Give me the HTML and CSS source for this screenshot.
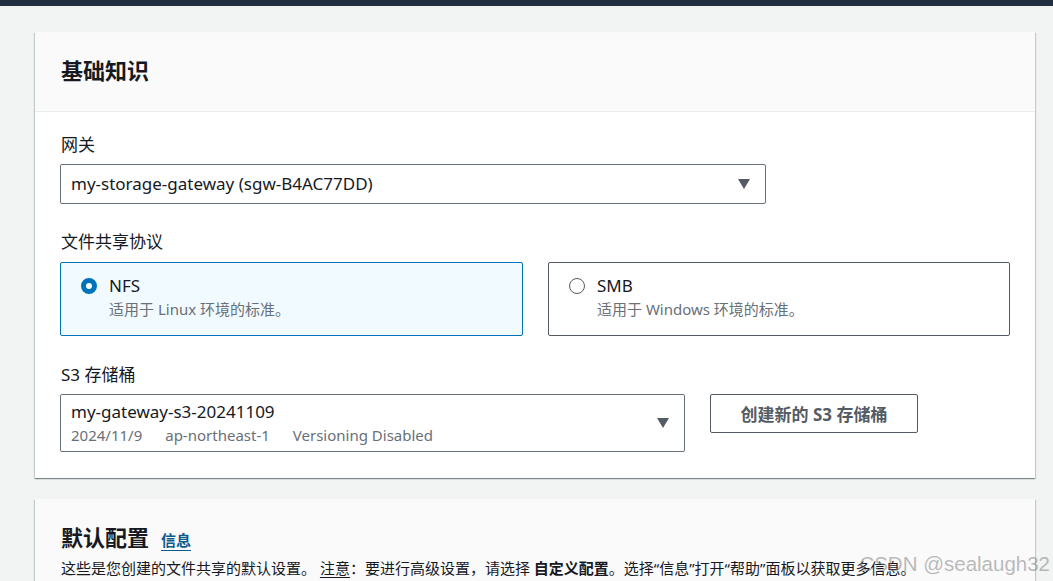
FILE: index.html
```html
<!DOCTYPE html>
<html lang="zh">
<head>
<meta charset="utf-8">
<link rel="stylesheet" href="styles.css">
</head>
<body>
<div class="topbar"></div>
<main class="page">
  <section class="card">
    <header class="card-header">
      <h2 class="card-title">基础知识</h2>
    </header>
    <div class="card-body">
      <div class="field">
        <div class="label">网关</div>
        <div class="select select-gw">
          <span class="select-value">my-storage-gateway (sgw-B4AC77DD)</span>
          <span class="caret"></span>
        </div>
      </div>
      <div class="field field-tiles">
        <div class="label">文件共享协议</div>
        <div class="tiles">
          <div class="tile tile-on">
            <span class="radio radio-on"></span>
            <div class="tile-text">
              <div class="tile-name">NFS</div>
              <div class="tile-desc">适用于 Linux 环境的标准。</div>
            </div>
          </div>
          <div class="tile">
            <span class="radio"></span>
            <div class="tile-text">
              <div class="tile-name">SMB</div>
              <div class="tile-desc">适用于 Windows 环境的标准。</div>
            </div>
          </div>
        </div>
      </div>
      <div class="field field-last">
        <div class="label">S3 存储桶</div>
        <div class="bucket-row">
          <div class="select select-bucket">
            <div class="bucket-text">
              <div class="select-value">my-gateway-s3-20241109</div>
              <div class="bucket-meta"><span>2024/11/9</span><span>ap-northeast-1</span><span>Versioning Disabled</span></div>
            </div>
            <span class="caret"></span>
          </div>
          <button class="btn">创建新的 S3 存储桶</button>
        </div>
      </div>
    </div>
  </section>
  <section class="card card2">
    <header class="card-header2">
      <h2 class="card-title">默认配置 <a class="info">信息</a></h2>
      <p class="desc">这些是您创建的文件共享的默认设置。 <u>注意</u>：要进行高级设置，请选择 <b>自定义配置</b>。选择“信息”打开“帮助”面板以获取更多信息。</p>
    </header>
  </section>
</main>
<div class="watermark">CSDN @sealaugh32</div>
</body>
</html>
```
FILE: styles.css
```css
* { box-sizing: border-box; }
html, body {
  margin: 0;
  height: 100%;
  overflow: hidden;
}
body {
  background: #f2f3f3;
  font-family: "Noto Sans", "Noto Sans CJK SC", sans-serif;
  color: #16191f;
  position: relative;
}
.topbar {
  height: 6px;
  background: #232f3e;
}
.page {
  padding: 26px 18px 0 35px;
  display: flex;
  flex-direction: column;
  gap: 21px;
}
.card {
  background: #fff;
  width: 1000px;
  box-shadow: 0 1px 1px 0 rgba(0,28,36,.3), 1px 1px 1px 0 rgba(0,28,36,.15), -1px 1px 1px 0 rgba(0,28,36,.15);
}
.card-header {
  background: #fafafa;
  border-bottom: 1px solid #eaeded;
  padding: 23px 25px 26px 26px;
}
.card-title {
  margin: 0;
  font-size: 22px;
  line-height: 30px;
  font-weight: 700;
  display: flex;
  align-items: baseline;
  gap: 12px;
}
.card-body {
  padding: 22px 25px 26px 25px;
}
.field { margin-bottom: 27px; }
.field-tiles { margin-bottom: 28px; }
.field-last { margin-bottom: 0; }
.label {
  font-size: 17px;
  line-height: 22px;
  margin-bottom: 8px;
  padding-left: 1px;
}
.select {
  border: 1px solid #687078;
  border-radius: 2px;
  background: #fff;
  display: flex;
  align-items: center;
  justify-content: space-between;
  padding: 0 15px 0 10px;
}
.select-gw {
  width: 706px;
  height: 40px;
}
.select-value {
  font-size: 17px;
  line-height: 22px;
}
.caret {
  width: 0;
  height: 0;
  border-left: 6.5px solid transparent;
  border-right: 6.5px solid transparent;
  border-top: 10px solid #545b64;
}
.tiles {
  display: grid;
  grid-template-columns: 463px 462px;
  gap: 25px;
  margin-top: 9px;
}
.tile {
  height: 74px;
  border: 1px solid #545b64;
  border-radius: 2px;
  display: flex;
  align-items: flex-start;
  gap: 12px;
  padding: 12px 20px;
}
.tile-on {
  border-color: #0073bb;
  background: #f1faff;
}
.radio {
  width: 16px;
  height: 16px;
  border-radius: 50%;
  border: 1px solid #545b64;
  margin-top: 3px;
  flex: none;
  background: #fff;
}
.radio-on {
  border: 5px solid #0073bb;
}
.tile-name {
  font-size: 17px;
  line-height: 22px;
}
.tile-desc {
  font-size: 15px;
  line-height: 24px;
  color: #687078;
}
.bucket-row {
  display: flex;
  gap: 25px;
  align-items: flex-start;
  margin-top: 8px;
}
.select-bucket {
  width: 625px;
  height: 58px;
  padding-right: 15px;
}
.bucket-text { margin-top: 1px; }
.bucket-meta {
  font-size: 15px;
  line-height: 24px;
  color: #687078;
  display: flex;
  gap: 23px;
}
.btn {
  width: 208px;
  height: 39px;
  border: 1px solid #545b64;
  border-radius: 2px;
  background: #fff;
  color: #545b64;
  font-family: inherit;
  font-size: 17px;
  font-weight: 700;
  padding: 0;
}
.card2 {
  background: #fafafa;
  height: 120px;
}
.card-header2 {
  padding: 23px 25px 0 26px;
}
.info {
  font-size: 15px;
  font-weight: 700;
  color: #0b5c8c;
  text-decoration: underline;
  text-underline-offset: 4px;
}
.desc {
  margin: 2px 0 0;
  font-size: 15px;
  line-height: 22px;
  color: #16191f;
}
.desc u { text-underline-offset: 3px; }
.watermark {
  position: absolute;
  right: 3px;
  bottom: 5px;
  font-family: "Liberation Sans", sans-serif;
  font-size: 20.5px;
  color: rgba(120,120,120,.5);
}
```
